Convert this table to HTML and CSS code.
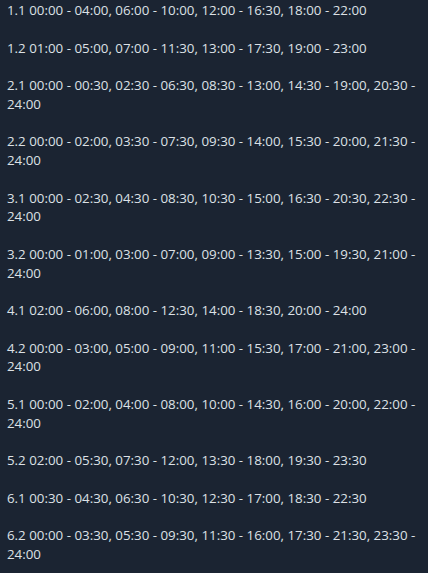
FILE: index.html
```html
<!DOCTYPE html>
<html>
<head>
<meta charset="utf-8">
<link rel="stylesheet" href="styles.css">
</head>
<body>
<div class="list">
<p class="item">1.1 00:00 - 04:00, 06:00 - 10:00, 12:00 - 16:30, 18:00 - 22:00</p>
<p class="item">1.2 01:00 - 05:00, 07:00 - 11:30, 13:00 - 17:30, 19:00 - 23:00</p>
<p class="item">2.1 00:00 - 00:30, 02:30 - 06:30, 08:30 - 13:00, 14:30 - 19:00, 20:30 - 24:00</p>
<p class="item">2.2 00:00 - 02:00, 03:30 - 07:30, 09:30 - 14:00, 15:30 - 20:00, 21:30 - 24:00</p>
<p class="item">3.1 00:00 - 02:30, 04:30 - 08:30, 10:30 - 15:00, 16:30 - 20:30, 22:30 - 24:00</p>
<p class="item">3.2 00:00 - 01:00, 03:00 - 07:00, 09:00 - 13:30, 15:00 - 19:30, 21:00 - 24:00</p>
<p class="item">4.1 02:00 - 06:00, 08:00 - 12:30, 14:00 - 18:30, 20:00 - 24:00</p>
<p class="item">4.2 00:00 - 03:00, 05:00 - 09:00, 11:00 - 15:30, 17:00 - 21:00, 23:00 - 24:00</p>
<p class="item">5.1 00:00 - 02:00, 04:00 - 08:00, 10:00 - 14:30, 16:00 - 20:00, 22:00 - 24:00</p>
<p class="item">5.2 02:00 - 05:30, 07:30 - 12:00, 13:30 - 18:00, 19:30 - 23:30</p>
<p class="item">6.1 00:30 - 04:30, 06:30 - 10:30, 12:30 - 17:00, 18:30 - 22:30</p>
<p class="item">6.2 00:00 - 03:30, 05:30 - 09:30, 11:30 - 16:00, 17:30 - 21:30, 23:30 - 24:00</p>
</div>
</body>
</html>
```
FILE: styles.css
```css
html, body {
  margin: 0;
  padding: 0;
  background: #1b2432;
  height: 100%;
}
body {
  font-family: "Open Sans", sans-serif;
  font-size: 13.33px;
  line-height: 18.75px;
  color: #dde1e6;
}
.list {
  display: flex;
  flex-direction: column;
  gap: 18.75px;
  padding: 1px 8px 0 7px;
}
.item {
  margin: 0;
}
```
